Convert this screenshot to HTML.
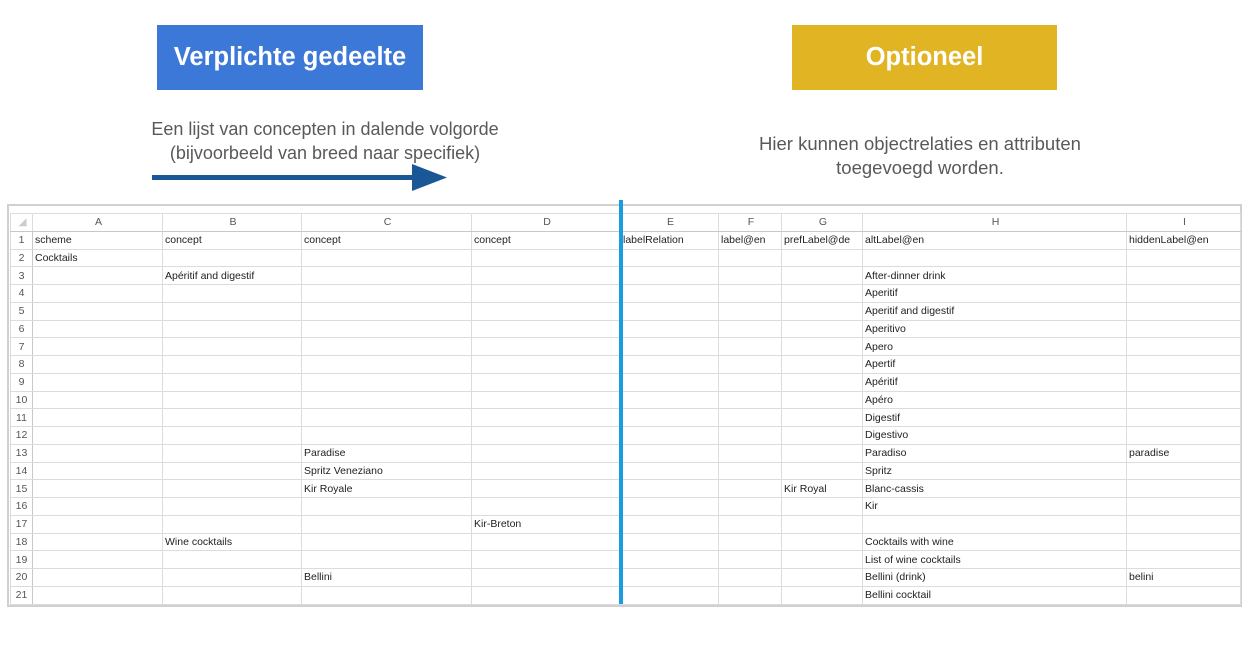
<!DOCTYPE html>
<html><head><meta charset="utf-8"><style>
body{margin:0;width:1255px;height:653px;background:#fff;position:relative;overflow:hidden;font-family:"Liberation Sans",sans-serif}
.box{position:absolute;color:#fff;font-weight:bold;font-size:25.5px;display:flex;align-items:center;justify-content:center}
.cap{position:absolute;color:#595959;font-size:18px;text-align:center;line-height:24px}
table{position:absolute;left:10px;top:213px;border-collapse:collapse;table-layout:fixed;font-size:10.5px;color:#222}
td{border:1px solid #dcdcdc;height:15.76px;padding:1px 0 0 2px;white-space:nowrap;overflow:hidden;line-height:15px}
tr.h td{text-align:center;color:#555;background:#fff;border-bottom:1px solid #c8c8c8}
td.n{text-align:center;color:#555;padding-left:0;border-right:1px solid #c8c8c8}
</style></head><body>
<div class="box" style="left:157px;top:25px;width:266px;height:65px;background:#3c78d8">Verplichte gedeelte</div>
<div class="box" style="left:792px;top:25px;width:265px;height:65px;background:#e1b423">Optioneel</div>
<div class="cap" style="left:100px;top:117px;width:450px">Een lijst van concepten in dalende volgorde<br>(bijvoorbeeld van breed naar specifiek)</div>
<div class="cap" style="left:690px;top:132px;width:460px;font-size:18.5px">Hier kunnen objectrelaties en attributen<br>toegevoegd worden.</div>
<svg style="position:absolute;left:0;top:0" width="1255" height="653">
<rect x="152" y="175" width="262" height="5" fill="#1a5796"/>
<polygon points="412,164 447,177.5 412,191" fill="#1a5796"/>
<rect x="8" y="205" width="1233" height="401" fill="none" stroke="#d0d0d0" stroke-width="2"/>
</svg>
<table>
<colgroup><col style="width:22px"><col style="width:130px"><col style="width:139px"><col style="width:170px"><col style="width:149px"><col style="width:98px"><col style="width:63px"><col style="width:81px"><col style="width:264px"><col style="width:114px"></colgroup>
<tr class="h"><td style="color:#ccc">◢</td><td>A</td><td>B</td><td>C</td><td>D</td><td>E</td><td>F</td><td>G</td><td>H</td><td>I</td></tr>
<tr><td class="n">1</td><td>scheme</td><td>concept</td><td>concept</td><td>concept</td><td>labelRelation</td><td>label@en</td><td>prefLabel@de</td><td>altLabel@en</td><td>hiddenLabel@en</td></tr>
<tr><td class="n">2</td><td>Cocktails</td><td></td><td></td><td></td><td></td><td></td><td></td><td></td><td></td></tr>
<tr><td class="n">3</td><td></td><td>Apéritif and digestif</td><td></td><td></td><td></td><td></td><td></td><td>After-dinner drink</td><td></td></tr>
<tr><td class="n">4</td><td></td><td></td><td></td><td></td><td></td><td></td><td></td><td>Aperitif</td><td></td></tr>
<tr><td class="n">5</td><td></td><td></td><td></td><td></td><td></td><td></td><td></td><td>Aperitif and digestif</td><td></td></tr>
<tr><td class="n">6</td><td></td><td></td><td></td><td></td><td></td><td></td><td></td><td>Aperitivo</td><td></td></tr>
<tr><td class="n">7</td><td></td><td></td><td></td><td></td><td></td><td></td><td></td><td>Apero</td><td></td></tr>
<tr><td class="n">8</td><td></td><td></td><td></td><td></td><td></td><td></td><td></td><td>Apertif</td><td></td></tr>
<tr><td class="n">9</td><td></td><td></td><td></td><td></td><td></td><td></td><td></td><td>Apéritif</td><td></td></tr>
<tr><td class="n">10</td><td></td><td></td><td></td><td></td><td></td><td></td><td></td><td>Apéro</td><td></td></tr>
<tr><td class="n">11</td><td></td><td></td><td></td><td></td><td></td><td></td><td></td><td>Digestif</td><td></td></tr>
<tr><td class="n">12</td><td></td><td></td><td></td><td></td><td></td><td></td><td></td><td>Digestivo</td><td></td></tr>
<tr><td class="n">13</td><td></td><td></td><td>Paradise</td><td></td><td></td><td></td><td></td><td>Paradiso</td><td>paradise</td></tr>
<tr><td class="n">14</td><td></td><td></td><td>Spritz Veneziano</td><td></td><td></td><td></td><td></td><td>Spritz</td><td></td></tr>
<tr><td class="n">15</td><td></td><td></td><td>Kir Royale</td><td></td><td></td><td></td><td>Kir Royal</td><td>Blanc-cassis</td><td></td></tr>
<tr><td class="n">16</td><td></td><td></td><td></td><td></td><td></td><td></td><td></td><td>Kir</td><td></td></tr>
<tr><td class="n">17</td><td></td><td></td><td></td><td>Kir-Breton</td><td></td><td></td><td></td><td></td><td></td></tr>
<tr><td class="n">18</td><td></td><td>Wine cocktails</td><td></td><td></td><td></td><td></td><td></td><td>Cocktails with wine</td><td></td></tr>
<tr><td class="n">19</td><td></td><td></td><td></td><td></td><td></td><td></td><td></td><td>List of wine cocktails</td><td></td></tr>
<tr><td class="n">20</td><td></td><td></td><td>Bellini</td><td></td><td></td><td></td><td></td><td>Bellini (drink)</td><td>belini</td></tr>
<tr><td class="n">21</td><td></td><td></td><td></td><td></td><td></td><td></td><td></td><td>Bellini cocktail</td><td></td></tr>
</table>
<div style="position:absolute;left:619px;top:200px;width:4px;height:404px;background:#1a9de0"></div>
</body></html>
